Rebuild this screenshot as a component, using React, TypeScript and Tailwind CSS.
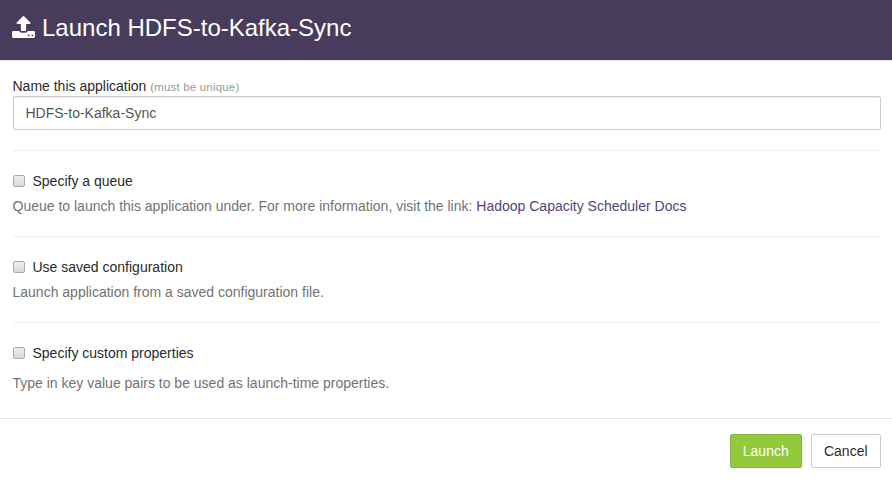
import React from 'react';

function UploadIcon() {
  return (
    <svg viewBox="64 64 1664 1600" className="mt-4 h-[22px] w-[23px] shrink-0 fill-white" aria-hidden="true">
      <path d="M1344 1472q0-26-19-45t-45-19-45 19-19 45 19 45 45 19 45-19 19-45zm256 0q0-26-19-45t-45-19-45 19-19 45 19 45 45 19 45-19 19-45zm128-224v320q0 40-28 68t-68 28h-1472q-40 0-68-28t-28-68v-320q0-40 28-68t68-28h427q21 56 70.5 92t110.5 36h256q61 0 110.5-36t70.5-92h427q40 0 68 28t28 68zm-325-648q-17 40-59 40h-256v448q0 26-19 45t-45 19h-256q-26 0-45-19t-19-45v-448h-256q-42 0-59-40-17-39 14-69l448-448q18-19 45-19t45 19l448 448q31 30 14 69z" />
    </svg>
  );
}

function Option({ label, children, last = false }: { label: string; children: React.ReactNode; last?: boolean }) {
  return (
    <section className={last ? 'h-[95px] pt-5' : 'h-[86px] border-b border-[#eeeeee] pt-5'}>
      <label className="flex h-5 items-center text-[#2b2b2b]">
        <input
          type="checkbox"
          className="mr-2 h-3 w-3 appearance-none rounded-[2px] border border-[#a9a9a9] bg-linear-to-b from-[#eeeeee] to-[#d9d9d9]"
        />
        {label}
      </label>
      <p className={last ? 'mt-[10px] text-[#737373]' : 'mt-[5px] text-[#737373]'}>{children}</p>
    </section>
  );
}

export default function App() {
  return (
    <div className="h-[482px] w-[892px] overflow-hidden bg-white font-['Liberation_Sans',Arial,sans-serif] text-sm leading-5 text-[#2b2b2b]">
      <header className="flex h-[61px] items-start border-b border-[#e5e5e5] bg-[#483c5d] pl-3 text-white">
        <UploadIcon />
        <h1 className="ml-[7px] mt-3 text-2xl leading-8">Launch HDFS-to-Kafka-Sync</h1>
      </header>
      <main className="pl-[12.5px] pr-[11px]">
        <div className="h-[90px] border-b border-[#eeeeee] pt-[15px]">
          <label htmlFor="app-name" className="block h-5">
            Name this application <small className="text-[11.4px] tracking-[0.23px] text-[#999999]">(must be unique)</small>
          </label>
          <input
            id="app-name"
            defaultValue="HDFS-to-Kafka-Sync"
            className="block h-[34px] w-full rounded-[2px] border border-[#cccccc] px-3 text-[#555555] shadow-[inset_0_1px_1px_rgba(0,0,0,0.075)] outline-none"
          />
        </div>
        <Option label="Specify a queue">
          Queue to launch this application under. For more information, visit the link:{' '}
          <a href="#" className="text-[#53456f]">Hadoop Capacity Scheduler Docs</a>
        </Option>
        <Option label="Use saved configuration">Launch application from a saved configuration file.</Option>
        <Option label="Specify custom properties" last>
          Type in key value pairs to be used as launch-time properties.
        </Option>
      </main>
      <footer className="flex justify-end gap-[9px] border-t border-[#e5e5e5] pr-[11px] pt-[15px]">
        <button className="h-[34px] w-[72px] rounded-[2px] border border-[#82b534] bg-[#94c93d] pr-[0.5px] text-white">Launch</button>
        <button className="h-[34px] w-[70px] rounded-[2px] border border-[#cccccc] bg-white pr-[0.5px] text-[#2b2b2b]">Cancel</button>
      </footer>
    </div>
  );
}
